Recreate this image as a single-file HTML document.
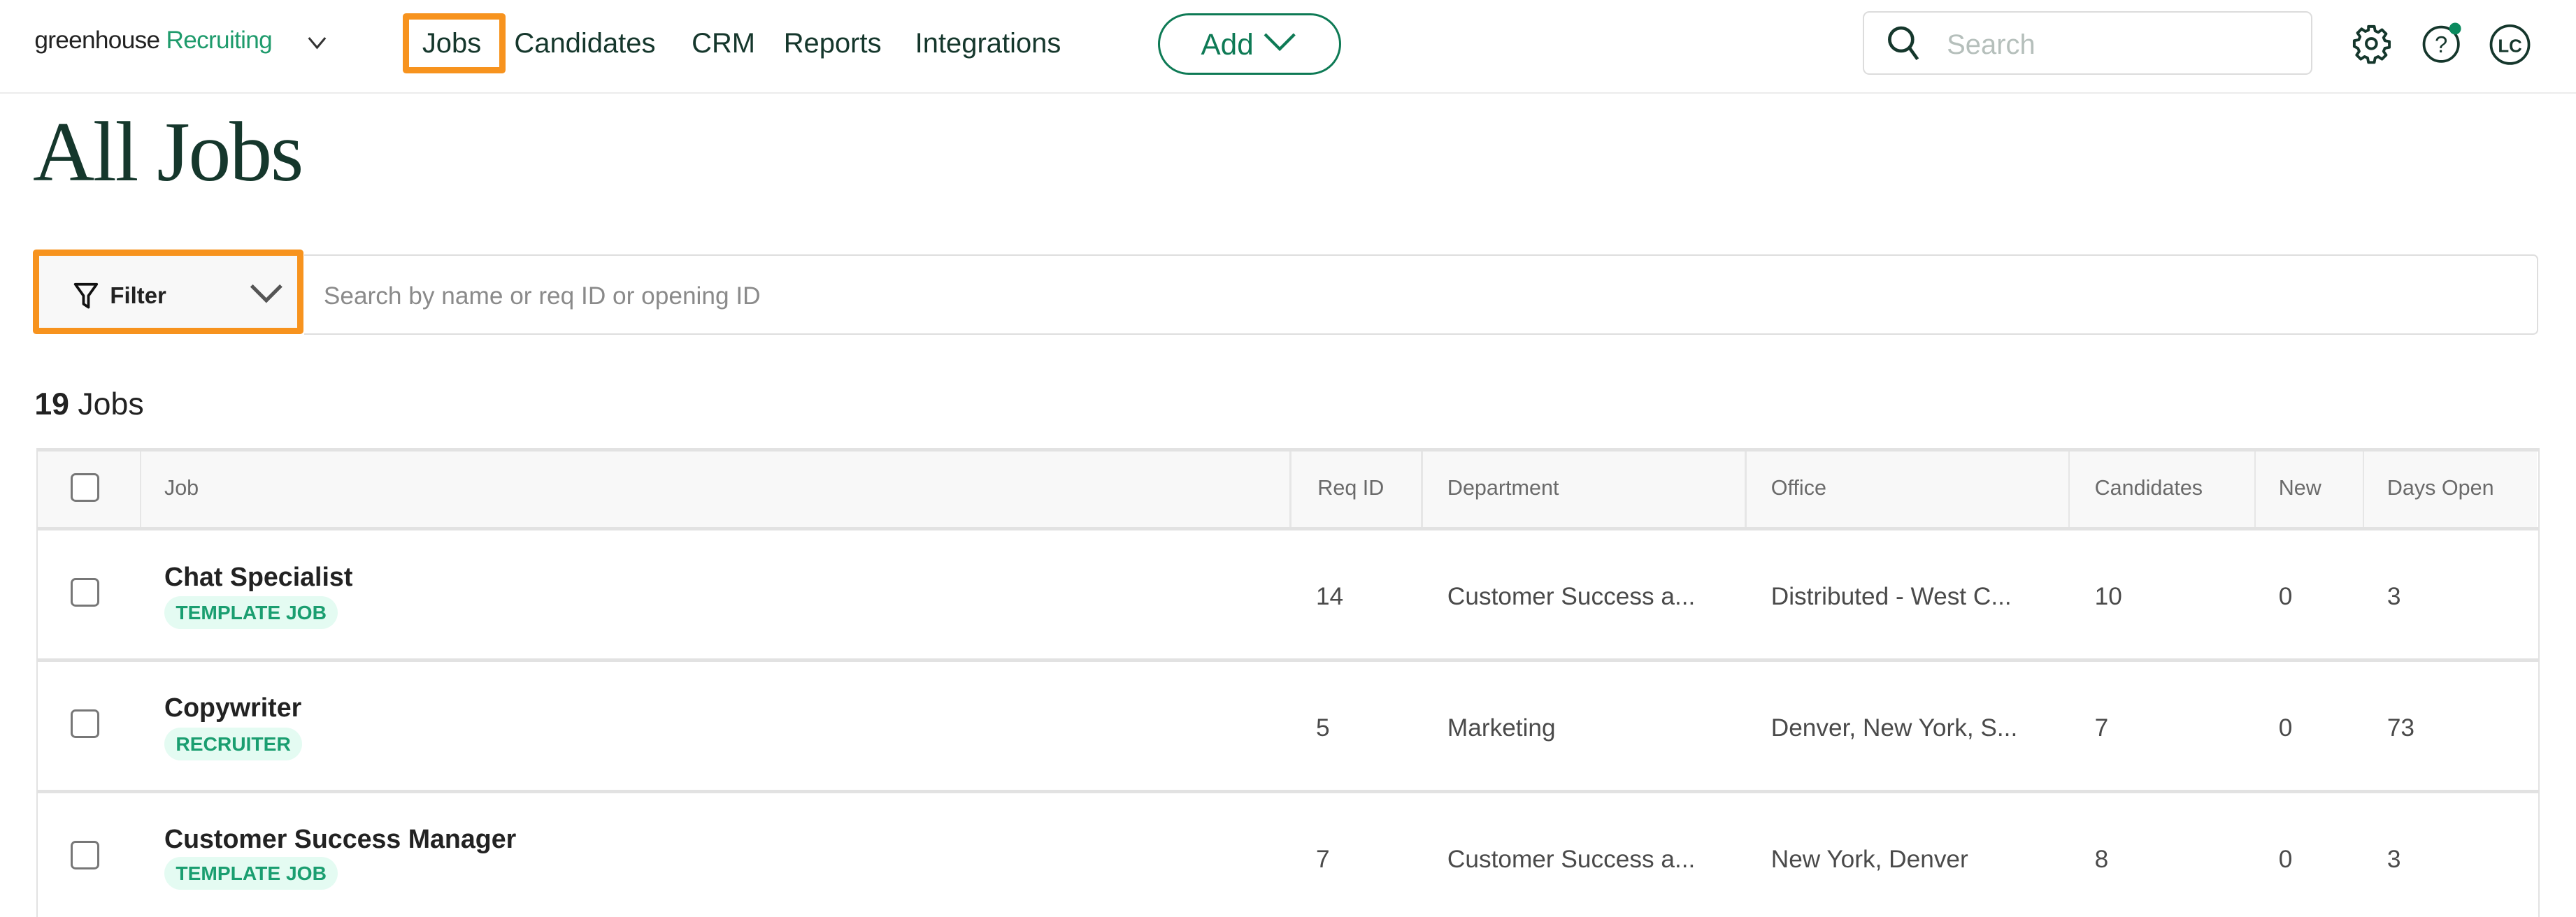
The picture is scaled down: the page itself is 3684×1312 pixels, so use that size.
<!DOCTYPE html>
<html><head><meta charset="utf-8"><style>
html,body{margin:0;padding:0;background:#fff;overflow:hidden}
body{width:3684px;height:1312px}
#w{zoom:2.3495;width:1568px;height:559px;position:relative;font-family:"Liberation Sans",sans-serif;color:#24292e}
.a{position:absolute;white-space:nowrap}
.nav{font-size:17px;color:#15372c;top:17px}
.th{font-size:13px;color:#6a6a6a;top:290px}
.td{font-size:15px;color:#4a4a4a}
.cb{position:absolute;left:43px;width:15px;height:15px;border:1.3px solid #777;border-radius:3px;background:#fff}
.title{font-size:16px;font-weight:bold;color:#222}
.tag{position:absolute;left:100px;height:20px;line-height:20px;padding:0 7px;border-radius:10px;background:#e4fbf2;color:#1a9e70;font-size:12px;font-weight:bold;letter-spacing:0}
.vl{position:absolute;top:274px;width:1px;height:47px;background:#e6e6e6}
.hl{position:absolute;left:22px;width:1523px;height:2px;background:#e2e2e2}
</style></head><body><div id="w">
<div class="a" style="left:21px;top:16px;font-size:15px;color:#222;letter-spacing:-.3px">greenhouse <span style="color:#1f9b6c">Recruiting</span></div>
<svg class="a" style="left:186px;top:20px" width="14" height="12" viewBox="0 0 14 12"><path d="M2 3 L7 9 L12 3" fill="none" stroke="#333" stroke-width="1.3"/></svg>
<div class="a" style="left:245px;top:8px;width:55px;height:29px;border:4px solid #f7931e;border-radius:2px"></div>
<div class="a nav" style="left:257px">Jobs</div>
<div class="a nav" style="left:313px">Candidates</div>
<div class="a nav" style="left:421px">CRM</div>
<div class="a nav" style="left:477px">Reports</div>
<div class="a nav" style="left:557px">Integrations</div>
<div class="a" style="left:705px;top:8px;width:109px;height:35px;border:1.5px solid #0e7a55;border-radius:19px"></div>
<div class="a" style="left:731px;top:17px;font-size:18px;color:#0e7a55">Add</div>
<svg class="a" style="left:767px;top:18px" width="24" height="16" viewBox="0 0 24 16"><path d="M3 3 L12 12 L21 3" fill="none" stroke="#0e7a55" stroke-width="1.8"/></svg>
<div class="a" style="left:1134px;top:7px;width:272px;height:37px;border:1px solid #dcdcdc;border-radius:4px"></div>
<svg class="a" style="left:1146px;top:14px" width="26" height="26" viewBox="0 0 26 26"><circle cx="11" cy="10" r="7" fill="none" stroke="#15372c" stroke-width="2"/><path d="M16 15 L21 22" stroke="#15372c" stroke-width="2"/></svg>
<div class="a" style="left:1185px;top:18px;font-size:17px;color:#b5bfbb">Search</div>
<svg class="a" style="left:1431px;top:14px" width="25" height="25" viewBox="0 0 24 24"><path d="M10.3 2h3.4l.5 2.6 1.8.8 2.2-1.5 2.4 2.4-1.5 2.2.8 1.8 2.6.5v3.4l-2.6.5-.8 1.8 1.5 2.2-2.4 2.4-2.2-1.5-1.8.8-.5 2.6h-3.4l-.5-2.6-1.8-.8-2.2 1.5-2.4-2.4 1.5-2.2-.8-1.8L2 13.7v-3.4l2.6-.5.8-1.8-1.5-2.2 2.4-2.4 2.2 1.5 1.8-.8z" fill="none" stroke="#15372c" stroke-width="1.6" stroke-linejoin="round"/><circle cx="12" cy="12" r="3" fill="none" stroke="#15372c" stroke-width="1.6"/></svg>
<svg class="a" style="left:1474px;top:12px" width="28" height="28" viewBox="0 0 28 28"><circle cx="12" cy="15" r="10.5" fill="none" stroke="#15372c" stroke-width="1.6"/><text x="12" y="20" font-size="14" text-anchor="middle" fill="#15372c" font-family="Liberation Sans">?</text><circle cx="20.5" cy="5.5" r="3.6" fill="#0a8a5e"/></svg>
<svg class="a" style="left:1515px;top:13px" width="28" height="28" viewBox="0 0 28 28"><circle cx="13" cy="14" r="11.5" fill="none" stroke="#15372c" stroke-width="1.6"/><text x="13" y="18.5" font-size="11" font-weight="bold" text-anchor="middle" fill="#15372c" font-family="Liberation Sans">LC</text></svg>
<div class="a" style="left:0;top:56px;width:1568px;height:1px;background:#ececec"></div>
<div class="a" style="left:20px;top:63px;font-family:'Liberation Serif',serif;font-size:52px;color:#15372c;letter-spacing:-1px">All Jobs</div>
<div class="a" style="left:185px;top:155px;width:1359px;height:47px;border:1px solid #dedede;border-left:none;border-radius:0 3px 3px 0"></div>
<div class="a" style="left:20px;top:152px;width:157px;height:44px;border:4px solid #f7931e;border-radius:2px;background:#f8f8f8"></div>
<svg class="a" style="left:44px;top:171px" width="18" height="18" viewBox="0 0 18 18"><path d="M2 2 H15 L10 9 V16 L7 14 V9 Z" fill="none" stroke="#111" stroke-width="1.6" stroke-linejoin="round"/></svg>
<div class="a" style="left:67px;top:172px;font-size:14px;font-weight:bold;color:#222">Filter</div>
<svg class="a" style="left:151px;top:172px" width="22" height="14" viewBox="0 0 22 14"><path d="M2 2 L11 11 L20 2" fill="none" stroke="#555" stroke-width="2.2"/></svg>
<div class="a" style="left:197px;top:172px;font-size:15px;color:#8a8a8a">Search by name or req ID or opening ID</div>
<div class="a" style="left:21px;top:236px;font-size:19px;color:#222"><b>19</b> Jobs</div>
<div class="a" style="left:22px;top:273px;width:1522px;height:290px;border:1px solid #e2e2e2;border-bottom:none"></div>
<div class="a" style="left:23px;top:274px;width:1521px;height:47px;background:#f8f8f8"></div>
<div class="vl" style="left:85px"></div><div class="vl" style="left:785px"></div><div class="vl" style="left:865px"></div><div class="vl" style="left:1062px"></div><div class="vl" style="left:1259px"></div><div class="vl" style="left:1372px"></div><div class="vl" style="left:1438px"></div>
<div class="hl" style="top:273px;height:2px"></div>
<div class="hl" style="top:321px"></div>
<div class="hl" style="top:401px"></div>
<div class="hl" style="top:481px"></div>
<div class="cb" style="top:288px"></div>
<div class="a th" style="left:100px">Job</div>
<div class="a th" style="left:802px">Req ID</div>
<div class="a th" style="left:881px">Department</div>
<div class="a th" style="left:1078px">Office</div>
<div class="a th" style="left:1275px">Candidates</div>
<div class="a th" style="left:1387px">New</div>
<div class="a th" style="left:1453px">Days Open</div>
<div class="cb" style="top:352px"></div>
<div class="a title" style="left:100px;top:342px">Chat Specialist</div>
<div class="tag" style="top:363px">TEMPLATE JOB</div>
<div class="a td" style="left:801px;top:355px">14</div>
<div class="a td" style="left:881px;top:355px">Customer Success a...</div>
<div class="a td" style="left:1078px;top:355px">Distributed - West C...</div>
<div class="a td" style="left:1275px;top:355px">10</div>
<div class="a td" style="left:1387px;top:355px">0</div>
<div class="a td" style="left:1453px;top:355px">3</div>
<div class="cb" style="top:432px"></div>
<div class="a title" style="left:100px;top:422px">Copywriter</div>
<div class="tag" style="top:443px">RECRUITER</div>
<div class="a td" style="left:801px;top:435px">5</div>
<div class="a td" style="left:881px;top:435px">Marketing</div>
<div class="a td" style="left:1078px;top:435px">Denver, New York, S...</div>
<div class="a td" style="left:1275px;top:435px">7</div>
<div class="a td" style="left:1387px;top:435px">0</div>
<div class="a td" style="left:1453px;top:435px">73</div>
<div class="cb" style="top:512px"></div>
<div class="a title" style="left:100px;top:502px">Customer Success Manager</div>
<div class="tag" style="top:522px">TEMPLATE JOB</div>
<div class="a td" style="left:801px;top:515px">7</div>
<div class="a td" style="left:881px;top:515px">Customer Success a...</div>
<div class="a td" style="left:1078px;top:515px">New York, Denver</div>
<div class="a td" style="left:1275px;top:515px">8</div>
<div class="a td" style="left:1387px;top:515px">0</div>
<div class="a td" style="left:1453px;top:515px">3</div>
</div></body></html>
